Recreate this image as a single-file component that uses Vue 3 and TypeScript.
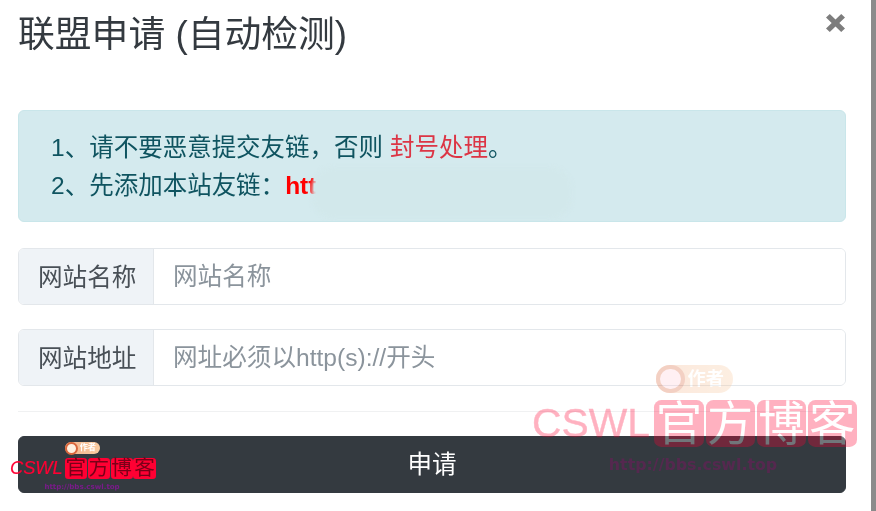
<script setup lang="ts">
const fields = [
  { label: '网站名称', placeholder: '网站名称' },
  { label: '网站地址', placeholder: '网址必须以http(s)://开头' },
]

const marks = [
  { id: 'large', chars: ['官', '方', '博', '客'] },
  { id: 'small', chars: ['官', '方', '博', '客'] },
]
</script>

<template>
  <div class="page">
    <div class="modal">
      <header class="modal__header">
        <h4 class="modal__title">联盟申请 (自动检测)</h4>
        <button class="modal__close" type="button" aria-label="关闭">
          <svg viewBox="0 0 20 20" width="19" height="18" preserveAspectRatio="none">
            <path d="M0 4 4 0l6 6 6-6 4 4-6 6 6 6-4 4-6-6-6 6-4-4 6-6z" fill="#7d7d7d" />
          </svg>
        </button>
      </header>

      <div class="alert">
        <div class="alert__line">1、请不要恶意提交友链，否则 <span class="alert__danger">封号处理</span>。</div>
        <div class="alert__line">2、先添加本站友链：<b class="alert__link">htt</b></div>
        <div class="alert__smear"></div>
      </div>

      <div v-for="field in fields" :key="field.label" class="field">
        <span class="field__label">{{ field.label }}</span>
        <input class="field__input" type="text" :placeholder="field.placeholder">
      </div>

      <hr class="divider">

      <button class="submit" type="button">申请</button>
    </div>
    <div class="scrollbar"></div>

    <div v-for="mark in marks" :key="mark.id" class="mark" :class="`mark--${mark.id}`">
      <div class="mark__badge"><i class="mark__medal"></i><span>作者</span></div>
      <div class="mark__row">
        <span class="mark__latin">CSWL</span>
        <span v-for="char in mark.chars" :key="char" class="mark__char">{{ char }}</span>
      </div>
      <div class="mark__url">http://bbs.cswl.top</div>
    </div>
  </div>
</template>

<style scoped>
.page {
  position: relative;
  display: flex;
  width: 876px;
  height: 511px;
  overflow: hidden;
  background: #fff;
  font-family: "Liberation Sans", "Noto Sans CJK SC", sans-serif;
  filter: blur(0.35px);
}

.modal {
  flex: 1;
  min-width: 0;
  padding: 0 25px 0 18px;
  box-sizing: border-box;
}

.scrollbar {
  width: 5px;
  background: #8b8b8b;
}

.modal__header {
  position: relative;
  height: 110px;
}

.modal__title {
  margin: 0;
  padding-top: 12px;
  color: #343a40;
  font-size: 36.8px;
  font-weight: 400;
  line-height: 46px;
}

.modal__close {
  position: absolute;
  top: 14px;
  right: 1px;
  padding: 0;
  border: 0;
  background: none;
  line-height: 0;
}

.alert {
  position: relative;
  height: 112px;
  padding: 18px 0 0 32px;
  box-sizing: border-box;
  overflow: hidden;
  border: 1px solid #c9e6ea;
  border-radius: 6px;
  background: #d4eaee;
  color: #0f5460;
  font-size: 24.5px;
  line-height: 37.5px;
}

.alert__line {
  white-space: nowrap;
}

.alert__danger {
  color: #dc3545;
}

.alert__link {
  position: relative;
  color: #f00;
}

.alert__smear {
  position: absolute;
  top: 56px;
  left: 293px;
  width: 260px;
  height: 52px;
  border-radius: 22px;
  background: #d2e8eb;
  filter: blur(2px);
}

.field {
  display: flex;
  height: 57px;
  margin-top: 24px;
  box-sizing: border-box;
  overflow: hidden;
  border: 1px solid #e3e7eb;
  border-radius: 6px;
}

.alert + .field {
  margin-top: 26px;
}

.field__label {
  display: flex;
  align-items: center;
  flex: none;
  width: 135px;
  padding: 0 0 4px 19px;
  box-sizing: border-box;
  border-right: 1px solid #e3e7eb;
  background: #eff3f7;
  color: #495057;
  font-size: 24.6px;
}

.field__input {
  flex: 1;
  min-width: 0;
  padding: 0 19px;
  border: 0;
  outline: 0;
  background: #fff;
  color: #495057;
  font-family: inherit;
  font-size: 24.6px;
}

.field__input::placeholder {
  color: #8b949c;
  opacity: 1;
}

.divider {
  height: 1px;
  margin: 25px 0 24px;
  border: 0;
  background: #f0f1f2;
}

.submit {
  display: block;
  width: 100%;
  height: 57px;
  padding: 0 0 5px;
  border: 1px solid #343a40;
  border-radius: 6px;
  background: #343a40;
  color: #fff;
  font-family: inherit;
  font-size: 24.5px;
}

.mark {
  position: absolute;
  color: #ff0033;
  pointer-events: none;
}

.mark--large {
  top: 365px;
  left: 532px;
  font-size: 48px;
  opacity: 0.3;
}

.mark--small {
  top: 442px;
  left: 10px;
  font-size: 21.5px;
}

.mark__badge {
  display: flex;
  align-items: center;
  gap: 0.06em;
  width: 1.6em;
  height: 0.58em;
  margin-left: 2.58em;
  border-radius: 0.3em;
  background: linear-gradient(90deg, #f4b48c, #f9cba0);
  color: #fff;
}

.mark__badge span {
  font-size: 0.38em;
  font-weight: 700;
  line-height: 1;
}

.mark__medal {
  flex: none;
  width: 0.6em;
  height: 0.6em;
  box-sizing: border-box;
  border: 0.1em solid #d9663c;
  border-radius: 50%;
  background: #fff0e0;
}

.mark--large .mark__medal {
  background: #ffd0d8;
}

.mark__row {
  display: flex;
  align-items: center;
  margin-top: 0.15em;
}

.mark__latin {
  flex: none;
  width: 3em;
  font-size: 0.85em;
  line-height: 1;
  -webkit-text-stroke: 0.01em currentColor;
}

.mark--small .mark__latin {
  font-style: italic;
}

.mark__char {
  display: flex;
  align-items: center;
  justify-content: center;
  flex: none;
  width: 1.07em;
  height: 1.03em;
  margin-right: 0.04em;
  border-radius: 0.16em;
  background: #ff0033;
  color: #fff;
  font-size: 0.96em;
  line-height: 1;
}

.mark--small .mark__char {
  color: #7a0018;
}

.mark__url {
  margin-top: 0.45em;
  margin-left: 4.85em;
  color: #7a1a8a;
  font-family: "DejaVu Sans", sans-serif;
  font-size: 0.33em;
  font-weight: 700;
  white-space: nowrap;
}

.mark--large .mark__url {
  color: #a20072;
}
</style>

<style>
html,
body {
  margin: 0;
}
</style>
